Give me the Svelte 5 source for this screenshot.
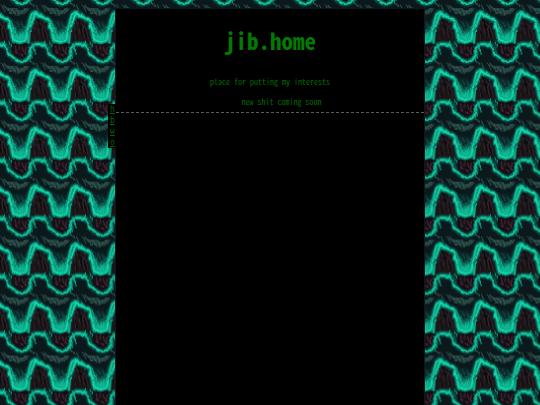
<script>
  const links = ['h', 'b', 'w', 'o'];
  const tileWidth = 40.5;
  const tileHeight = 57.9;
  const ridge = 'M-10 26L-5 13L-1 16L5 18L9 21L10 27L12 32L13 39L20 42L26 39L28 28L31 15L35 12L40 16L45 18L49 21';
  const shore = 'M-6 44L-1 44L4 45L7 48L8 54L13 57L17 61L22 62L27 60L31 54L30 48L34 45L40 44L45 45L48 48';
</script>

<svelte:head><title>jib.home</title></svelte:head>

<div class="page">
  <svg class="backdrop" aria-hidden="true">
    <defs>
      <filter id="rough" x="-5%" y="-5%" width="110%" height="110%">
        <feTurbulence type="fractalNoise" baseFrequency="0.3 0.16" numOctaves="2" seed="4" result="noise" />
        <feDisplacementMap in="SourceGraphic" in2="noise" scale="3" xChannelSelector="R" yChannelSelector="G" />
        <feGaussianBlur stdDeviation="0.4" />
      </filter>
      <filter id="glow" x="-20%" y="-20%" width="140%" height="140%"><feGaussianBlur stdDeviation="1.2" /></filter>
      <linearGradient id="valley" x1="0" y1="0" x2="0" y2="1">
        <stop offset="0" stop-color="#0a3032" />
        <stop offset="0.5" stop-color="#0b5f54" />
        <stop offset="0.82" stop-color="#10cda1" />
        <stop offset="1" stop-color="#10cda1" />
      </linearGradient>
      <g id="wave" fill="none" stroke-linejoin="round" stroke-linecap="round">
        <path d="M1 5L8 8L15 8L22 10L29 7L26 13L18 16L9 13Z" fill="#20413e" />
        <path d="M1 5l4 6M4 5l5 7M8 8l4 6M12 9l3 6M17 9l2 6M20 13l6-4M24 14l5-5M36 5l2 5M32 4l2 3" stroke="#3b5d56" stroke-width="0.9" />
        <path d="M5 8l4 5M10 9l4 6M15 10l2 5" stroke="#0d1b1e" stroke-width="0.8" />
        <path d="M32 18L35 15L40 19L46 22L50 30L52 41L43 42L36 43L30 42L30 27Z" fill="#1a1419" />
        <path d="M8 22L14 20L22 22L27 28L28 41L22 44L13 43L10 34Z" fill="url(#valley)" filter="url(#glow)" />
        <path d="M14 21l5 9M18 20l4 9M22 19l3 6" stroke="#092023" stroke-width="1.5" />
        <path d="M9 22l3 16M12 26l4 14M15 30l4 12M19 33l2 10M23 32l-1 9M11 21l3 8M26 27l-2 13" stroke="#12d0a3" stroke-width="0.9" />
        <path d="M28 24l0 19M30 31l-1 12" stroke="#0eab8a" stroke-width="1.5" />
        <path d={ridge} stroke="#0a9c80" stroke-width="3.8" filter="url(#glow)" />
        <path d={ridge} stroke="#13d8a9" stroke-width="1.8" />
        <path d={shore} stroke="#0a8a72" stroke-width="3.4" filter="url(#glow)" />
        <path d={shore} stroke="#12cda2" stroke-width="1.7" />
        <path d="M34 20l1 19M37 20l3 16M41 23l3 15M44 25l4 14" stroke="#36272e" stroke-width="1.1" />
        <path d="M38 19l4 18M42 23l4 15M35 31l2 8" stroke="#0a0b0e" stroke-width="1.1" />
        <path d="M12 47L15 44L20 45L25 43L29 47L28 54L23 58L17 57L12 53Z" fill="#160d13" />
        <path d="M15 47l2 6M19 47l-1 6M22 47l2 6M26 47l-1 7M20 54l3 2" stroke="#4a3239" stroke-width="1.1" />
        <path d="M30 50l2 8M32 46l4 8M28 56l3 5M3 42l3 5M9 42l2 5M31 42l2 3" stroke="#10b08d" stroke-width="1" />
      </g>
      <pattern id="waves" width={tileWidth} height={tileHeight} patternUnits="userSpaceOnUse">
        <rect width="41" height="58" fill="#0b181c" />
        <g filter="url(#rough)">
          {#each [-1, 0, 1] as row}
            {#each [-1, 0, 1] as column}
              <use href="#wave" x={column * tileWidth} y={row * tileHeight} />
            {/each}
          {/each}
        </g>
      </pattern>
    </defs>
    <rect width="100%" height="100%" fill="url(#waves)" />
  </svg>
  <nav aria-label="Pages">
    {#each links as link}<a href={`#${link}`}>{link}</a>{/each}
  </nav>
  <main>
    <header>
      <h1>jib.home</h1>
      <p>place for putting my interests</p>
      <p class="news">new shit coming soon</p>
    </header>
  </main>
</div>

<style>
  :global(body) { margin: 0; background: #0b181c; }
  .page { position: relative; min-height: 100vh; display: flex; justify-content: center; box-sizing: border-box; padding-top: 9px; font-family: "Noto Sans Mono CJK JP", "Noto Sans CJK JP", "DejaVu Sans Mono", monospace; }
  .backdrop { position: absolute; inset: 0; width: 100%; height: 100%; }
  main { position: relative; width: 57%; background: #000; outline: 1px solid #0a1820; }
  header { border-bottom: 1px dashed #5c5c5c; padding-top: 15px; text-align: center; }
  h1, p { margin: 0; }
  h1 { margin-bottom: 16px; color: #007c00; font-size: 23px; line-height: 32px; }
  p { font-size: 8px; line-height: 20px; color: #006c00; }
  p.news { padding-left: 23px; }
  nav { position: absolute; z-index: 1; left: 20%; top: 104px; width: 8px; padding-left: 2px; display: flex; flex-direction: column; background: #000; box-sizing: border-box; font-family: "DejaVu Sans Mono", monospace; }
  a { color: #006400; font-size: 8px; line-height: 11px; }
</style>
